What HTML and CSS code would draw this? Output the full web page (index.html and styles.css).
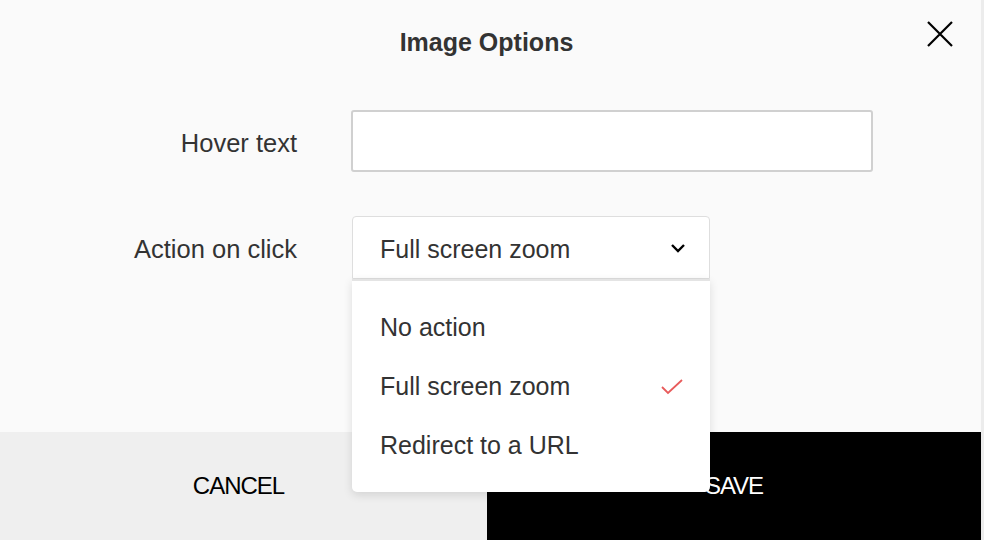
FILE: index.html
```html
<!DOCTYPE html>
<html lang="en">
<head>
    <meta charset="UTF-8">
    <meta name="viewport" content="width=device-width, initial-scale=1.0">
    <title>Image Options</title>
    <link rel="stylesheet" href="styles.css">
</head>
<body>
    <div class="modal">
        <div class="modal-header">
            <h1 class="modal-title">Image Options</h1>
            <button class="close-btn" aria-label="Close">
                <svg width="26" height="26" viewBox="0 0 26 26">
                    <path d="M1 1 L25 25 M25 1 L1 25" stroke="#000" stroke-width="2.2" fill="none"/>
                </svg>
            </button>
        </div>
        <div class="modal-body">
            <div class="form-row">
                <label class="form-label">Hover text</label>
                <input class="text-input" type="text">
            </div>
            <div class="form-row">
                <label class="form-label">Action on click</label>
                <div class="select">
                    <div class="select-value">
                        <span>Full screen zoom</span>
                        <svg width="16" height="10" viewBox="0 0 16 10">
                            <path d="M2 2 L8 8 L14 2" stroke="#000" stroke-width="2.4" fill="none"/>
                        </svg>
                    </div>
                    <ul class="select-menu">
                        <li class="select-option">No action</li>
                        <li class="select-option">
                            Full screen zoom
                            <svg width="22" height="16" viewBox="0 0 22 16">
                                <path d="M1 8 L7 14 L21 1" stroke="#e85b5b" stroke-width="1.8" fill="none"/>
                            </svg>
                        </li>
                        <li class="select-option">Redirect to a URL</li>
                    </ul>
                </div>
            </div>
        </div>
        <div class="modal-footer">
            <button class="btn btn-cancel">CANCEL</button>
            <button class="btn btn-save">SAVE</button>
        </div>
    </div>
</body>
</html>
```

FILE: styles.css
```css
body {
    margin: 0;
    padding: 0;
    background-color: #ececec;
    font-family: "Liberation Sans", Arial, sans-serif;
    color: #333;
}

.modal {
    width: 981px;
    height: 540px;
    background-color: #fafafa;
    display: flex;
    flex-direction: column;
}

.modal-header {
    position: relative;
    height: 84px;
    padding-right: 8px;
    display: flex;
    justify-content: center;
    align-items: center;
}

.modal-title {
    margin: 0;
    font-size: 25px;
    font-weight: bold;
    color: #333;
}

.close-btn {
    position: absolute;
    top: 21px;
    right: 28px;
    padding: 0;
    border: none;
    background: none;
    cursor: pointer;
}

.modal-body {
    padding-top: 26px;
    display: flex;
    flex-direction: column;
    gap: 44px;
}

.form-row {
    display: flex;
    align-items: center;
}

.form-label {
    width: 297px;
    margin-right: 54px;
    padding-top: 4px;
    text-align: right;
    font-size: 25.5px;
}

.text-input {
    width: 522px;
    height: 62px;
    box-sizing: border-box;
    border: 2px solid #d0d0d0;
    border-radius: 3px;
    background: white;
}

.select {
    position: relative;
    width: 358px;
    margin-left: 1px;
}

.select-value {
    height: 63px;
    box-sizing: border-box;
    display: flex;
    align-items: center;
    justify-content: space-between;
    padding: 4px 23px 0 27px;
    background: white;
    border: 1px solid #dedede;
    border-radius: 4px 4px 0 0;
    font-size: 25px;
}

.select-value svg {
    margin-top: -4px;
}

.select-menu {
    position: absolute;
    top: 63px;
    left: 0;
    right: 0;
    z-index: 10;
    list-style: none;
    margin: 0;
    padding: 17px 0 17px;
    background: white;
    border-top: 2px solid #e4e4e4;
    border-radius: 0 0 5px 5px;
    box-shadow: 0 3px 10px rgba(0,0,0,0.12);
}

.select-option {
    height: 59px;
    display: flex;
    align-items: center;
    justify-content: space-between;
    padding: 0 27px 0 28px;
    font-size: 25px;
}

.modal-footer {
    margin-top: auto;
    height: 108px;
    display: flex;
}

.btn {
    flex: 1;
    border: none;
    font-family: "Liberation Sans", Arial, sans-serif;
    font-size: 24px;
    letter-spacing: -1px;
    cursor: pointer;
}

.btn-cancel {
    flex: 0 0 487px;
    background-color: #efefef;
    color: #000;
    padding-right: 16px;
}

.btn-save {
    background-color: #000;
    color: white;
}
```
